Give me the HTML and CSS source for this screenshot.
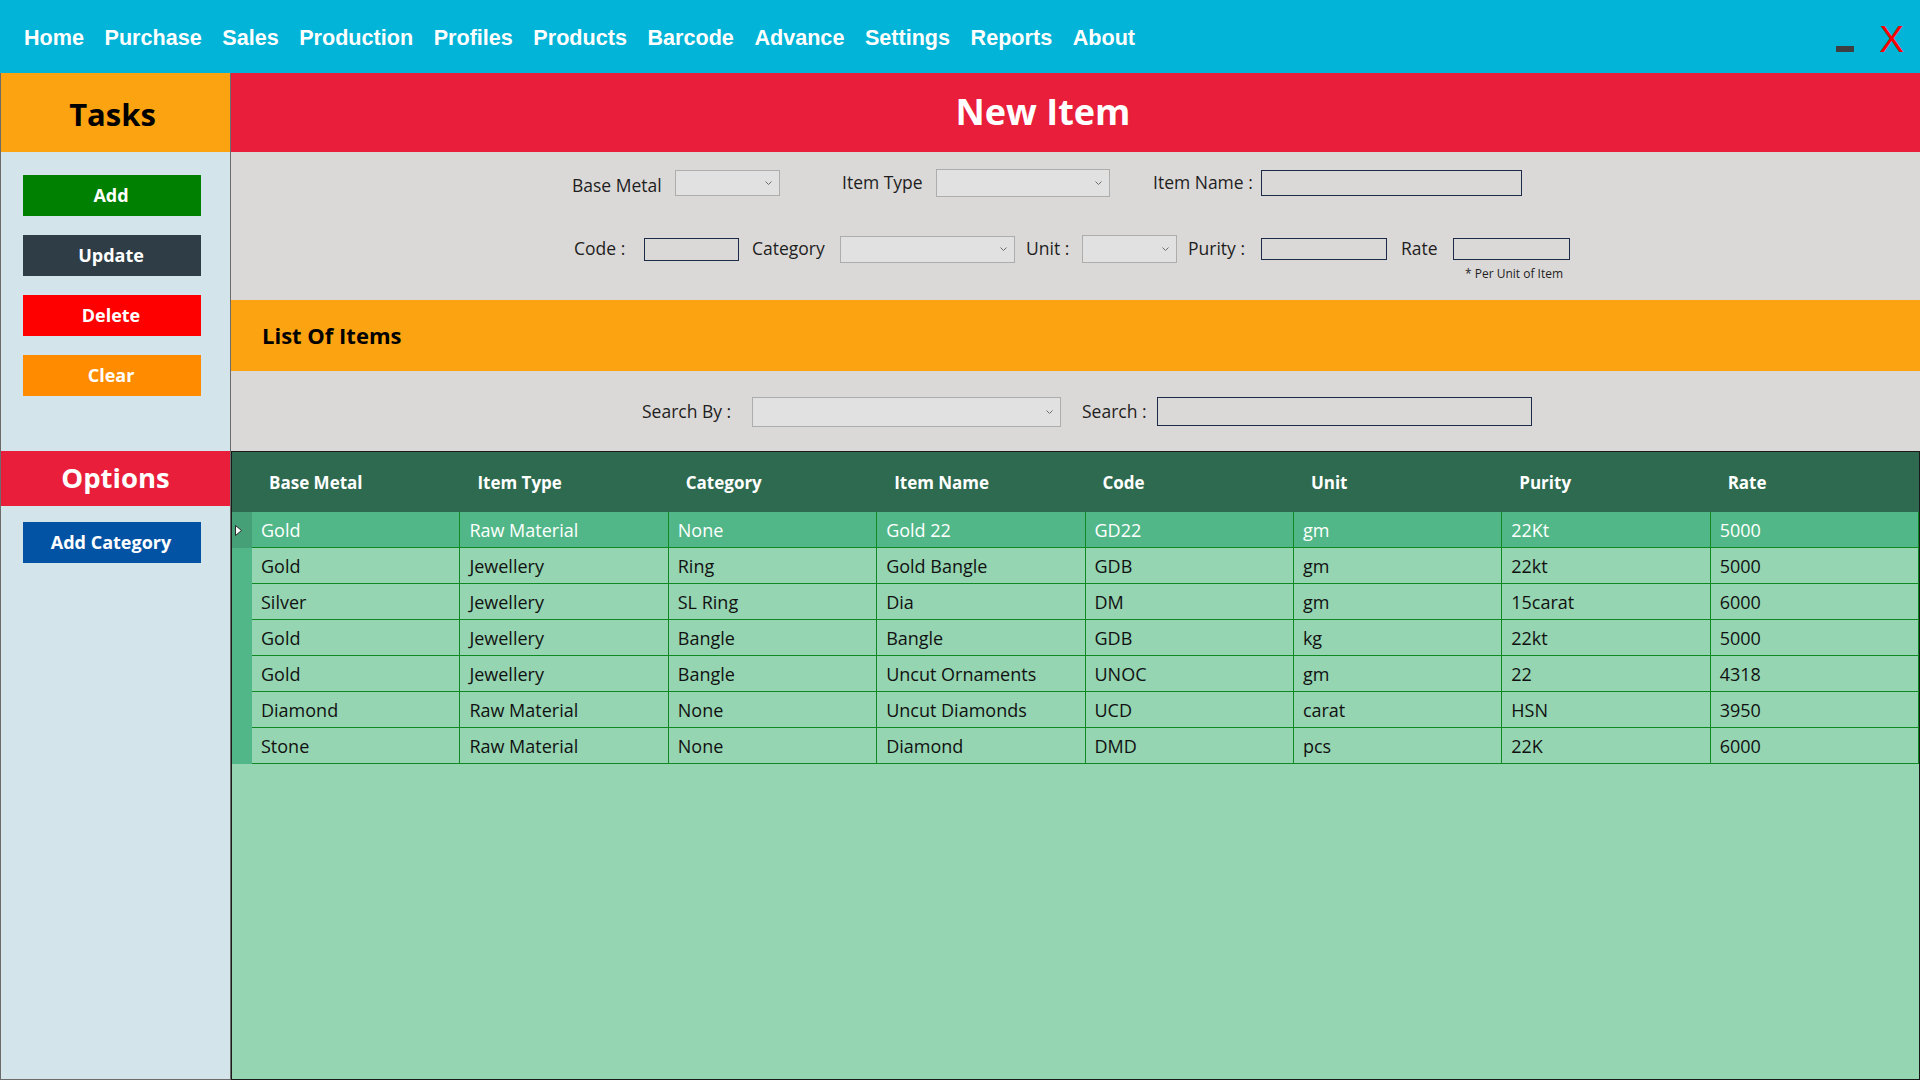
FILE: index.html
```html
<!DOCTYPE html>
<html>
<head>
<meta charset="utf-8">
<title>New Item</title>
<link rel="stylesheet" href="styles.css">
</head>
<body>
<header class="topbar">
  <nav class="menu">
    <span class="menu-item">Home</span>
    <span class="menu-item">Purchase</span>
    <span class="menu-item">Sales</span>
    <span class="menu-item">Production</span>
    <span class="menu-item">Profiles</span>
    <span class="menu-item">Products</span>
    <span class="menu-item">Barcode</span>
    <span class="menu-item">Advance</span>
    <span class="menu-item">Settings</span>
    <span class="menu-item">Reports</span>
    <span class="menu-item">About</span>
  </nav>
  <div class="win-controls">
    <span class="win-min"></span>
    <span class="win-close">X</span>
  </div>
</header>

<div class="app">
  <aside class="sidebar">
    <div class="side-head tasks-head">Tasks</div>
    <div class="side-buttons">
      <button class="btn btn-add">Add</button>
      <button class="btn btn-update">Update</button>
      <button class="btn btn-delete">Delete</button>
      <button class="btn btn-clear">Clear</button>
    </div>
    <div class="side-head options-head">Options</div>
    <div class="side-buttons options-buttons">
      <button class="btn btn-category">Add Category</button>
    </div>
  </aside>

  <main class="main">
    <div class="title">New Item</div>

    <section class="form">
      <div class="form-row row1">
        <span class="lbl w-basemetal lbl-low">Base Metal</span>
        <span class="combo c-basemetal"><svg class="chev" width="7" height="4" viewBox="0 0 7 4"><polyline points="0.5,0.5 3.5,3.5 6.5,0.5"/></svg></span>
        <span class="lbl w-itemtype">Item Type</span>
        <span class="combo c-itemtype"><svg class="chev" width="7" height="4" viewBox="0 0 7 4"><polyline points="0.5,0.5 3.5,3.5 6.5,0.5"/></svg></span>
        <span class="lbl w-itemname">Item Name :</span>
        <span class="tbox t-itemname"></span>
      </div>
      <div class="form-row row2">
        <span class="lbl w-code">Code :</span>
        <span class="tbox t-code"></span>
        <span class="lbl w-category">Category</span>
        <span class="combo c-category"><svg class="chev" width="7" height="4" viewBox="0 0 7 4"><polyline points="0.5,0.5 3.5,3.5 6.5,0.5"/></svg></span>
        <span class="lbl w-unit">Unit :</span>
        <span class="combo c-unit"><svg class="chev" width="7" height="4" viewBox="0 0 7 4"><polyline points="0.5,0.5 3.5,3.5 6.5,0.5"/></svg></span>
        <span class="lbl w-purity">Purity :</span>
        <span class="tbox t-purity"></span>
        <span class="lbl w-rate">Rate</span>
        <span class="tbox t-rate"></span>
      </div>
      <div class="note">* Per Unit of Item</div>
    </section>

    <div class="listbar">List Of Items</div>

    <section class="search">
      <span class="lbl w-searchby">Search By :</span>
      <span class="combo c-searchby"><svg class="chev" width="7" height="4" viewBox="0 0 7 4"><polyline points="0.5,0.5 3.5,3.5 6.5,0.5"/></svg></span>
      <span class="lbl w-search">Search :</span>
      <span class="tbox t-search"></span>
    </section>

    <section class="grid">
      <div class="grow ghead">
        <div class="rh"></div>
        <div class="hc">Base Metal</div>
        <div class="hc">Item Type</div>
        <div class="hc">Category</div>
        <div class="hc">Item Name</div>
        <div class="hc">Code</div>
        <div class="hc">Unit</div>
        <div class="hc">Purity</div>
        <div class="hc">Rate</div>
      </div>
      <div class="grow drow selected">
        <div class="rh"><svg width="9" height="13" viewBox="0 0 9 13"><polygon points="1.5,1.5 7.5,6.5 1.5,11.5" /></svg></div>
        <div class="dc">Gold</div><div class="dc">Raw Material</div><div class="dc">None</div><div class="dc">Gold 22</div><div class="dc">GD22</div><div class="dc">gm</div><div class="dc">22Kt</div><div class="dc">5000</div>
      </div>
      <div class="grow drow">
        <div class="rh"></div>
        <div class="dc">Gold</div><div class="dc">Jewellery</div><div class="dc">Ring</div><div class="dc">Gold Bangle</div><div class="dc">GDB</div><div class="dc">gm</div><div class="dc">22kt</div><div class="dc">5000</div>
      </div>
      <div class="grow drow">
        <div class="rh"></div>
        <div class="dc">Silver</div><div class="dc">Jewellery</div><div class="dc">SL Ring</div><div class="dc">Dia</div><div class="dc">DM</div><div class="dc">gm</div><div class="dc">15carat</div><div class="dc">6000</div>
      </div>
      <div class="grow drow">
        <div class="rh"></div>
        <div class="dc">Gold</div><div class="dc">Jewellery</div><div class="dc">Bangle</div><div class="dc">Bangle</div><div class="dc">GDB</div><div class="dc">kg</div><div class="dc">22kt</div><div class="dc">5000</div>
      </div>
      <div class="grow drow">
        <div class="rh"></div>
        <div class="dc">Gold</div><div class="dc">Jewellery</div><div class="dc">Bangle</div><div class="dc">Uncut Ornaments</div><div class="dc">UNOC</div><div class="dc">gm</div><div class="dc">22</div><div class="dc">4318</div>
      </div>
      <div class="grow drow">
        <div class="rh"></div>
        <div class="dc">Diamond</div><div class="dc">Raw Material</div><div class="dc">None</div><div class="dc">Uncut Diamonds</div><div class="dc">UCD</div><div class="dc">carat</div><div class="dc">HSN</div><div class="dc">3950</div>
      </div>
      <div class="grow drow">
        <div class="rh"></div>
        <div class="dc">Stone</div><div class="dc">Raw Material</div><div class="dc">None</div><div class="dc">Diamond</div><div class="dc">DMD</div><div class="dc">pcs</div><div class="dc">22K</div><div class="dc">6000</div>
      </div>
    </section>
  </main>
</div>
</body>
</html>
```

FILE: styles.css
```css
* { box-sizing: border-box; }

html, body {
  margin: 0;
  padding: 0;
  width: 1920px;
  height: 1080px;
  overflow: hidden;
}

body {
  font-family: "Open Sans", "Noto Sans", sans-serif;
  color: #1e1e1e;
  background: #dbd9d7;
}

/* ---------- top bar ---------- */
.topbar {
  height: 73px;
  background: #02b4d7;
  display: flex;
  align-items: flex-start;
}

.menu {
  display: flex;
  align-items: center;
  height: 73px;
  padding-left: 24px;
  padding-top: 3px;
  gap: 20.5px;
}

.menu-item {
  font-family: "Liberation Sans", Arial, sans-serif;
  font-weight: bold;
  font-size: 21.6px;
  color: #ffffff;
  line-height: 1;
}

.win-controls {
  margin-left: auto;
  display: flex;
  align-items: flex-start;
  padding-right: 16px;
}

.win-min {
  display: block;
  width: 18px;
  height: 6px;
  background: #3d3f42;
  margin-top: 46px;
  margin-right: 25px;
}

.win-close {
  display: block;
  font-family: "Liberation Sans", Arial, sans-serif;
  font-size: 37px;
  line-height: 37px;
  color: #ff0000;
  margin-top: 21px;
}

/* ---------- app layout ---------- */
.app {
  display: flex;
  height: 1007px;
}

.sidebar {
  width: 231px;
  flex: 0 0 231px;
  background: #d4e4eb;
  border-left: 1px solid #6b6b6b;
  border-right: 1px solid #6b6b6b;
  border-bottom: 1px solid #6b6b6b;
  display: flex;
  flex-direction: column;
}

.side-head {
  display: flex;
  align-items: center;
  justify-content: center;
  font-weight: bold;
}

.tasks-head {
  height: 79px;
  background: #fca311;
  color: #000000;
  font-size: 31px;
  padding-top: 2px;
  padding-right: 6px;
}

.options-head {
  height: 55px;
  background: #e81e3a;
  color: #ffffff;
  font-size: 27.5px;
  margin-top: 55px;
  padding-bottom: 2px;
}

.side-buttons {
  display: flex;
  flex-direction: column;
  gap: 19px;
  padding-top: 23px;
  padding-left: 22px;
}

.options-buttons {
  padding-top: 16px;
}

.btn {
  width: 178px;
  height: 41px;
  border: none;
  margin: 0;
  padding: 0 2px 2px 0;
  font-family: "Open Sans", "Noto Sans", sans-serif;
  font-weight: bold;
  font-size: 18px;
  color: #ffffff;
  display: flex;
  align-items: center;
  justify-content: center;
}

.btn-add { background: #008000; }
.btn-update { background: #2f3e46; }
.btn-delete { background: #ff0000; }
.btn-clear { background: #ff8c00; }
.btn-category { background: #0353a4; }

/* ---------- main ---------- */
.main {
  flex: 1;
  display: flex;
  flex-direction: column;
  min-width: 0;
}

.title {
  height: 79px;
  flex: 0 0 79px;
  background: #e81e3a;
  color: #ffffff;
  font-weight: bold;
  font-size: 36px;
  display: flex;
  align-items: center;
  justify-content: center;
  padding-right: 65px;
  padding-bottom: 2px;
}

.form {
  height: 148px;
  flex: 0 0 148px;
  background: #dbd9d7;
  padding-top: 17px;
}

.form-row {
  display: flex;
  align-items: center;
  height: 28px;
}

.row1 { padding-left: 341px; }
.row2 { padding-left: 343px; margin-top: 38px; }

.lbl {
  font-size: 17.5px;
  color: #1e1e1e;
  white-space: nowrap;
  line-height: 1;
}

.lbl-low { position: relative; top: 3px; }

.combo {
  display: flex;
  align-items: center;
  justify-content: flex-end;
  padding-right: 7px;
  background: #e1e1e1;
  border: 1px solid #adadad;
}

.chev polyline {
  fill: none;
  stroke: #6d6d6d;
  stroke-width: 1;
}

.tbox {
  display: block;
  border: 1px solid #1c2b47;
  background: transparent;
}

/* row 1 widths / spacing */
.w-basemetal { width: 89px; margin-right: 14px; }
.c-basemetal { width: 105px; height: 26px; margin-right: 62px; }
.w-itemtype { width: 81px; margin-right: 13px; }
.c-itemtype { width: 174px; height: 28px; margin-right: 43px; }
.w-itemname { width: 100px; margin-right: 8px; }
.t-itemname { width: 261px; height: 26px; }

/* row 2 widths / spacing */
.w-code { width: 53px; margin-right: 17px; }
.t-code { width: 95px; height: 23px; margin-right: 13px; }
.w-category { width: 76px; margin-right: 12px; }
.c-category { width: 175px; height: 27px; margin-right: 11px; }
.w-unit { width: 44px; margin-right: 12px; }
.c-unit { width: 95px; height: 28px; margin-right: 11px; }
.w-purity { width: 57px; margin-right: 16px; }
.t-purity { width: 126px; height: 22px; margin-right: 14px; }
.w-rate { width: 35px; margin-right: 17px; }
.t-rate { width: 117px; height: 22px; }

.note {
  font-size: 12px;
  line-height: 14px;
  padding-left: 1234px;
  margin-top: 4px;
  color: #1e1e1e;
}

/* ---------- list bar ---------- */
.listbar {
  height: 71px;
  flex: 0 0 71px;
  background: #fca311;
  color: #000000;
  font-weight: bold;
  font-size: 22px;
  display: flex;
  align-items: center;
  padding-left: 31px;
  padding-bottom: 2px;
}

/* ---------- search ---------- */
.search {
  height: 80px;
  flex: 0 0 80px;
  display: flex;
  align-items: center;
  padding-left: 411px;
  padding-top: 1px;
}

.w-searchby { width: 91px; margin-right: 19px; }
.c-searchby { width: 309px; height: 30px; margin-right: 21px; }
.w-search { width: 60px; margin-right: 15px; }
.t-search { width: 375px; height: 29px; }

/* ---------- grid ---------- */
.grid {
  flex: 1;
  background: #95d5b2;
  border: 1px solid #1a1a1a;
  display: flex;
  flex-direction: column;
}

.grow {
  display: grid;
  grid-template-columns: 20px repeat(8, 1fr);
}

.ghead {
  height: 60px;
  background: #2d6a4f;
}

.hc {
  display: flex;
  align-items: center;
  padding-left: 17px;
  color: #ffffff;
  font-weight: bold;
  font-size: 17px;
  white-space: nowrap;
}

.drow {
  height: 36px;
}

.rh {
  background: #52b788;
  display: flex;
  align-items: center;
  padding-left: 2px;
}

.ghead .rh { background: transparent; }

.dc {
  display: flex;
  align-items: center;
  padding-left: 9px;
  font-size: 18px;
  color: #111111;
  border-right: 1px solid #0f8a23;
  border-bottom: 1px solid #0f8a23;
  white-space: nowrap;
  overflow: hidden;
}

.selected .dc {
  background: #52b788;
  color: #ffffff;
}

.selected .rh {
  background: #45a077;
}

.selected .rh polygon {
  fill: #ffffff;
  stroke: #2a2a2a;
  stroke-width: 1;
}
```
